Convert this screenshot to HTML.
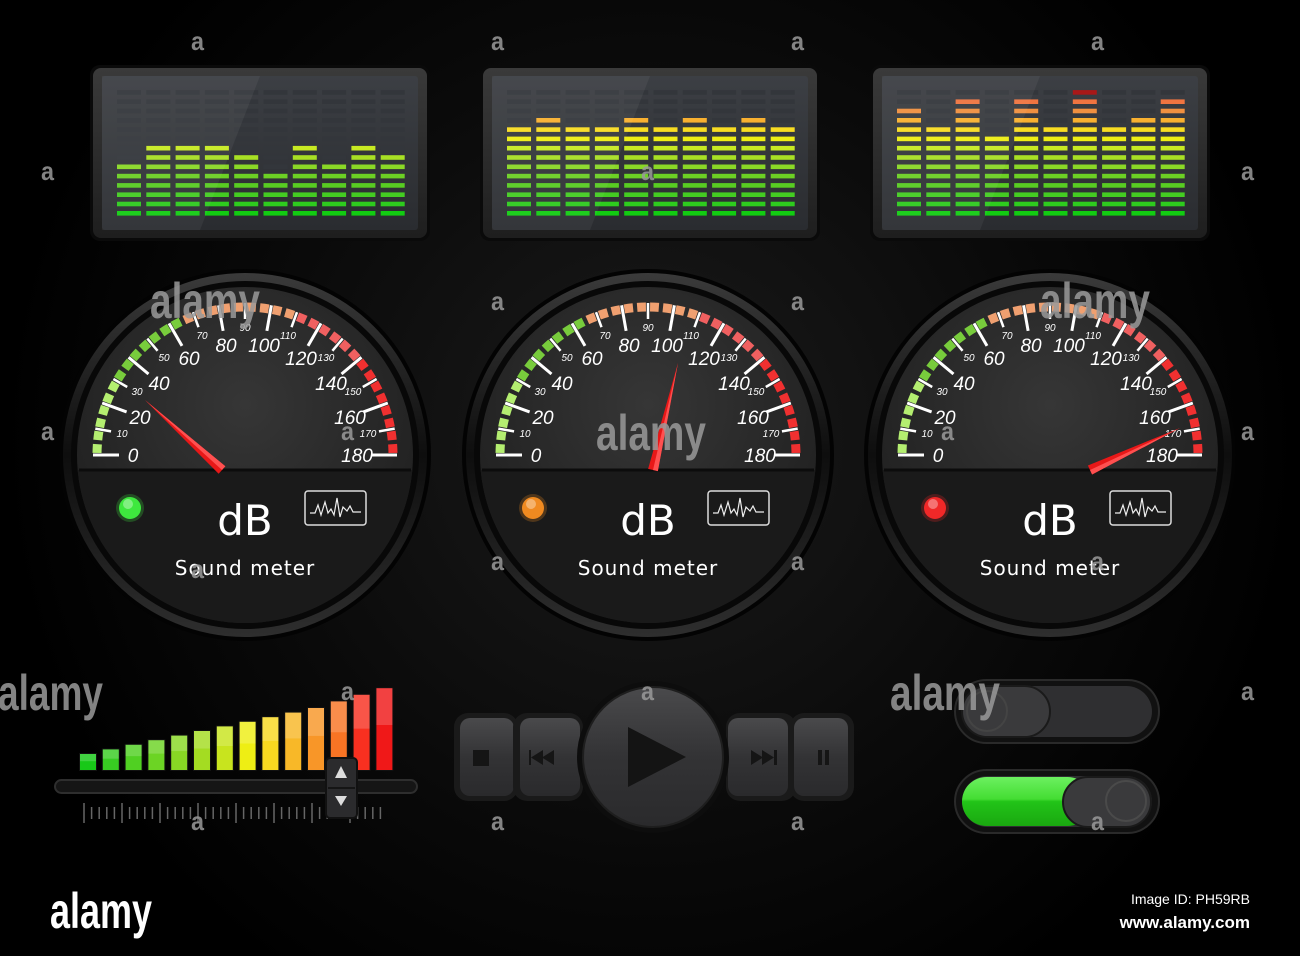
<!DOCTYPE html>
<html><head><meta charset="utf-8">
<style>
html,body{margin:0;padding:0;background:#000;}
svg{display:block;}
text{font-family:"Liberation Sans",sans-serif;}
.maj{font-size:19px;font-style:italic;fill:#fff;text-anchor:middle;}
.min{font-size:10px;font-style:italic;fill:#fff;text-anchor:middle;}
.wm{font-family:"Liberation Sans",sans-serif;font-weight:bold;fill:#9a9a9a;opacity:.85;}
.db{font-family:"DejaVu Sans",sans-serif;}
</style></head>
<body>
<svg id="s" width="1300" height="956" viewBox="0 0 1300 956" xmlns="http://www.w3.org/2000/svg">
<defs>
<radialGradient id="bg" cx="650" cy="440" r="650" gradientUnits="userSpaceOnUse">
<stop offset="0" stop-color="#1b1b1b"/><stop offset=".6" stop-color="#0a0a0a"/><stop offset="1" stop-color="#000"/></radialGradient>
<linearGradient id="ring" x1="0" y1="0" x2="0" y2="1">
<stop offset="0" stop-color="#3a3a3a"/><stop offset=".5" stop-color="#0e0e0e"/><stop offset="1" stop-color="#2e2e2e"/></linearGradient>
<radialGradient id="face" cx="0.5" cy="0.35" r="0.6">
<stop offset="0" stop-color="#363636"/><stop offset="1" stop-color="#202020"/></radialGradient>
<linearGradient id="panel" x1="0" y1="0" x2="0" y2="1">
<stop offset="0" stop-color="#3a3a3a"/><stop offset="1" stop-color="#1e1e1e"/></linearGradient>
<linearGradient id="screen" x1="0" y1="0" x2="0" y2="1">
<stop offset="0" stop-color="#3c3f44"/><stop offset="1" stop-color="#2a2c30"/></linearGradient>
<linearGradient id="btn" x1="0" y1="0" x2="0" y2="1">
<stop offset="0" stop-color="#4a4a4c"/><stop offset=".5" stop-color="#333335"/><stop offset="1" stop-color="#2a2a2c"/></linearGradient>
<linearGradient id="grn" x1="0" y1="0" x2="0" y2="1">
<stop offset="0" stop-color="#6cf060"/><stop offset=".45" stop-color="#44dd33"/><stop offset=".5" stop-color="#22c418"/><stop offset="1" stop-color="#1aa810"/></linearGradient>
<clipPath id="lower"><rect x="-200" y="15" width="400" height="200"/></clipPath>
</defs>
<rect width="1300" height="956" fill="url(#bg)"/>
<g id="eq"></g>
<g id="gauges"></g>

<g transform="translate(245,455)">
<text class="maj" x="-112" y="7">0</text><text class="maj" x="-105" y="-31">20</text><text class="maj" x="-86" y="-65">40</text><text class="maj" x="-56" y="-90">60</text><text class="maj" x="-19" y="-103">80</text><text class="maj" x="19" y="-103">100</text><text class="maj" x="56" y="-90">120</text><text class="maj" x="86" y="-65">140</text><text class="maj" x="105" y="-31">160</text><text class="maj" x="112" y="7">180</text>
<text class="min" x="-123" y="-18">10</text><text class="min" x="-108" y="-60">30</text><text class="min" x="-81" y="-94">50</text><text class="min" x="-43" y="-116">70</text><text class="min" x="0" y="-124">90</text><text class="min" x="43" y="-116">110</text><text class="min" x="81" y="-94">130</text><text class="min" x="108" y="-60">150</text><text class="min" x="123" y="-18">170</text>
<text class="db" x="0" y="80" font-size="42" fill="#fff" text-anchor="middle">dB</text>
<text class="db" x="0" y="120" font-size="20" fill="#fff" text-anchor="middle" letter-spacing="1">Sound meter</text>
</g>
<g transform="translate(648,455)">
<text class="maj" x="-112" y="7">0</text><text class="maj" x="-105" y="-31">20</text><text class="maj" x="-86" y="-65">40</text><text class="maj" x="-56" y="-90">60</text><text class="maj" x="-19" y="-103">80</text><text class="maj" x="19" y="-103">100</text><text class="maj" x="56" y="-90">120</text><text class="maj" x="86" y="-65">140</text><text class="maj" x="105" y="-31">160</text><text class="maj" x="112" y="7">180</text>
<text class="min" x="-123" y="-18">10</text><text class="min" x="-108" y="-60">30</text><text class="min" x="-81" y="-94">50</text><text class="min" x="-43" y="-116">70</text><text class="min" x="0" y="-124">90</text><text class="min" x="43" y="-116">110</text><text class="min" x="81" y="-94">130</text><text class="min" x="108" y="-60">150</text><text class="min" x="123" y="-18">170</text>
<text class="db" x="0" y="80" font-size="42" fill="#fff" text-anchor="middle">dB</text>
<text class="db" x="0" y="120" font-size="20" fill="#fff" text-anchor="middle" letter-spacing="1">Sound meter</text>
</g>
<g transform="translate(1050,455)">
<text class="maj" x="-112" y="7">0</text><text class="maj" x="-105" y="-31">20</text><text class="maj" x="-86" y="-65">40</text><text class="maj" x="-56" y="-90">60</text><text class="maj" x="-19" y="-103">80</text><text class="maj" x="19" y="-103">100</text><text class="maj" x="56" y="-90">120</text><text class="maj" x="86" y="-65">140</text><text class="maj" x="105" y="-31">160</text><text class="maj" x="112" y="7">180</text>
<text class="min" x="-123" y="-18">10</text><text class="min" x="-108" y="-60">30</text><text class="min" x="-81" y="-94">50</text><text class="min" x="-43" y="-116">70</text><text class="min" x="0" y="-124">90</text><text class="min" x="43" y="-116">110</text><text class="min" x="81" y="-94">130</text><text class="min" x="108" y="-60">150</text><text class="min" x="123" y="-18">170</text>
<text class="db" x="0" y="80" font-size="42" fill="#fff" text-anchor="middle">dB</text>
<text class="db" x="0" y="120" font-size="20" fill="#fff" text-anchor="middle" letter-spacing="1">Sound meter</text>
</g>
<g id="needles"></g>

<g id="lvl"></g>
<rect x="55" y="780" width="362" height="13" rx="6.5" fill="#151515" stroke="#2e2e2e" stroke-width="2"/>
<g id="ticks"></g>
<rect x="326" y="758" width="31" height="60" rx="4" fill="#2b2b2d" stroke="#111" stroke-width="2"/>
<line x1="328" y1="788" x2="355" y2="788" stroke="#151515" stroke-width="2"/>
<polygon points="341,766 335,778 347,778" fill="#ddd"/>
<polygon points="341,806 335,796 347,796" fill="#ddd"/>

<rect x="454" y="713" width="64" height="88" rx="14" fill="#1a1a1a"/>
<rect x="460" y="718" width="54" height="78" rx="10" fill="url(#btn)"/>
<rect x="473" y="750" width="16" height="16" fill="#151515"/>
<rect x="513" y="713" width="70" height="88" rx="14" fill="#1a1a1a"/>
<rect x="520" y="718" width="60" height="78" rx="10" fill="url(#btn)"/>
<polygon points="529,750 531,750 531,765 529,765" fill="#151515"/><polygon points="531,757.5 543,750 543,765" fill="#151515"/><polygon points="542,757.5 554,750 554,765" fill="#151515"/>
<rect x="726" y="713" width="70" height="88" rx="14" fill="#1a1a1a"/>
<rect x="728" y="718" width="60" height="78" rx="10" fill="url(#btn)"/>
<polygon points="751,750 763,757.5 751,765" fill="#151515"/><polygon points="762,750 774,757.5 762,765" fill="#151515"/><rect x="774" y="750" width="3" height="15" fill="#151515"/>
<rect x="790" y="713" width="64" height="88" rx="14" fill="#1a1a1a"/>
<rect x="794" y="718" width="54" height="78" rx="10" fill="url(#btn)"/>
<rect x="818" y="750" width="4" height="15" fill="#151515"/><rect x="825" y="750" width="4" height="15" fill="#151515"/>
<circle cx="653" cy="757" r="76" fill="#0d0d0d"/>
<circle cx="653" cy="757" r="70" fill="url(#btn)" stroke="#1e1e1e" stroke-width="2"/>
<polygon points="628,727 628,787 686,757" fill="#141414"/>

<rect x="955" y="680" width="204" height="63" rx="31.5" fill="#111" stroke="#2a2a2a" stroke-width="2"/>
<rect x="962" y="686" width="190" height="51" rx="25.5" fill="#2f2f31"/>
<rect x="962" y="686" width="88" height="51" rx="25.5" fill="#3a3a3c" stroke="#1a1a1a" stroke-width="2"/>
<circle cx="987" cy="711" r="20" fill="none" stroke="#444" stroke-width="2"/>
<rect x="955" y="770" width="204" height="63" rx="31.5" fill="#111" stroke="#2a2a2a" stroke-width="2"/>
<rect x="962" y="776" width="190" height="51" rx="25.5" fill="#2f2f31"/>
<rect x="962" y="777" width="130" height="49" rx="24.5" fill="url(#grn)"/>
<rect x="1063" y="777" width="88" height="50" rx="25" fill="#3a3a3c" stroke="#1a1a1a" stroke-width="2"/>
<circle cx="1126" cy="801" r="20" fill="none" stroke="#4a4a4a" stroke-width="2"/>

<text class="wm" x="150" y="318" font-size="50" textLength="110" lengthAdjust="spacingAndGlyphs">alamy</text>
<text class="wm" x="1040" y="318" font-size="50" textLength="110" lengthAdjust="spacingAndGlyphs">alamy</text>
<text class="wm" x="596" y="450" font-size="50" textLength="110" lengthAdjust="spacingAndGlyphs">alamy</text>
<text class="wm" x="-2" y="710" font-size="50" textLength="105" lengthAdjust="spacingAndGlyphs">alamy</text>
<text class="wm" x="890" y="710" font-size="50" textLength="110" lengthAdjust="spacingAndGlyphs">alamy</text>
<g class="wm" font-size="26">
<text x="191" y="50" textLength="13" lengthAdjust="spacingAndGlyphs">a</text><text x="491" y="50" textLength="13" lengthAdjust="spacingAndGlyphs">a</text><text x="791" y="50" textLength="13" lengthAdjust="spacingAndGlyphs">a</text><text x="1091" y="50" textLength="13" lengthAdjust="spacingAndGlyphs">a</text>
<text x="41" y="180" textLength="13" lengthAdjust="spacingAndGlyphs">a</text><text x="641" y="180" textLength="13" lengthAdjust="spacingAndGlyphs">a</text><text x="1241" y="180" textLength="13" lengthAdjust="spacingAndGlyphs">a</text>
<text x="491" y="310" textLength="13" lengthAdjust="spacingAndGlyphs">a</text><text x="791" y="310" textLength="13" lengthAdjust="spacingAndGlyphs">a</text>
<text x="41" y="440" textLength="13" lengthAdjust="spacingAndGlyphs">a</text><text x="341" y="440" textLength="13" lengthAdjust="spacingAndGlyphs">a</text><text x="941" y="440" textLength="13" lengthAdjust="spacingAndGlyphs">a</text><text x="1241" y="440" textLength="13" lengthAdjust="spacingAndGlyphs">a</text>
<text x="191" y="578" textLength="13" lengthAdjust="spacingAndGlyphs">a</text><text x="491" y="570" textLength="13" lengthAdjust="spacingAndGlyphs">a</text><text x="791" y="570" textLength="13" lengthAdjust="spacingAndGlyphs">a</text><text x="1091" y="570" textLength="13" lengthAdjust="spacingAndGlyphs">a</text>
<text x="341" y="700" textLength="13" lengthAdjust="spacingAndGlyphs">a</text><text x="641" y="700" textLength="13" lengthAdjust="spacingAndGlyphs">a</text><text x="1241" y="700" textLength="13" lengthAdjust="spacingAndGlyphs">a</text>
<text x="191" y="830" textLength="13" lengthAdjust="spacingAndGlyphs">a</text><text x="491" y="830" textLength="13" lengthAdjust="spacingAndGlyphs">a</text><text x="791" y="830" textLength="13" lengthAdjust="spacingAndGlyphs">a</text><text x="1091" y="830" textLength="13" lengthAdjust="spacingAndGlyphs">a</text>
</g>
<text x="50" y="928" font-weight="bold" font-size="50" fill="#fff" textLength="102" lengthAdjust="spacingAndGlyphs">alamy</text>
<text x="1250" y="904" font-size="14" fill="#fff" text-anchor="end">Image ID: PH59RB</text>
<text x="1250" y="928" font-size="17" font-weight="bold" fill="#fff" text-anchor="end">www.alamy.com</text>
</svg>
<script>
(function(){
var NS="http://www.w3.org/2000/svg";
function el(p,t,a){var e=document.createElementNS(NS,t);for(var k in a)e.setAttribute(k,a[k]);p.appendChild(e);return e;}
var eq=document.getElementById('eq');
var rowC=['#12cc12','#2ecc1e','#44cc22','#58cc22','#6cd024','#8ad826','#a8e024','#c8ea22','#eeee14','#f8dc22','#f8b030','#f09040','#f07440','#e82222'];
var panels=[[90,[6,8,8,8,7,5,8,6,8,7]],[480,[10,11,10,10,11,10,11,10,11,10]],[870,[12,10,13,9,13,10,14,10,11,13]]];
panels.forEach(function(p){
 var x=p[0];
 el(eq,'rect',{x:x,y:65,width:340,height:176,rx:10,fill:'#0a0a0a'});
 el(eq,'rect',{x:x+3,y:68,width:334,height:170,rx:8,fill:'url(#panel)'});
 el(eq,'rect',{x:x+12,y:76,width:316,height:154,rx:3,fill:'url(#screen)'});
 for(var c=0;c<10;c++){for(var r=0;r<14;r++){
  var lit=r<p[1][c];var col=(r==13&&c==6&&x==870)?'#a81818':rowC[r];
  el(eq,'rect',{x:x+27+c*29.3,y:211-r*9.3,width:24,height:4.6,fill:lit?col:'#33363b'});
 }}
 el(eq,'polygon',{points:(x+12)+',76 '+(x+170)+',76 '+(x+110)+',230 '+(x+12)+',230',fill:'#fff',opacity:'0.05'});
});
var g=document.getElementById('gauges');
function bandCol(v){if(v<30)return '#b4ee70';if(v<65)return '#78cc3c';if(v<110)return '#f0a070';if(v<140)return '#f06060';return '#f03030';}
[245,648,1050].forEach(function(cx,idx){
 var cy=455;
 el(g,'circle',{cx:cx,cy:cy,r:186,fill:'#030303'});
 el(g,'circle',{cx:cx,cy:cy,r:182,fill:'url(#ring)'});
 el(g,'circle',{cx:cx,cy:cy,r:174,fill:'#080808'});
 el(g,'circle',{cx:cx,cy:cy,r:168,fill:'url(#face)'});
 var lg=el(g,'g',{transform:'translate('+cx+','+cy+')'});
 el(lg,'circle',{cx:0,cy:0,r:168,fill:'#1a1a1a','clip-path':'url(#lower)'});
 el(lg,'line',{x1:-166,y1:15,x2:166,y2:15,stroke:'#0c0c0c','stroke-width':3});
 for(var v=0;v<180;v+=5){
  var a1=(180-v-0.8)*Math.PI/180,a2=(180-v-4.2)*Math.PI/180,R=148;
  el(lg,'path',{d:'M'+(R*Math.cos(a1))+' '+(-R*Math.sin(a1))+' A'+R+' '+R+' 0 0 1 '+(R*Math.cos(a2))+' '+(-R*Math.sin(a2)),stroke:bandCol(v+2.5),'stroke-width':9,fill:'none'});
 }
 for(var v=0;v<=180;v+=10){
  var a=(180-v)*Math.PI/180,r1=(v%20==0)?126:136,r2=152;
  el(lg,'line',{x1:r1*Math.cos(a),y1:-r1*Math.sin(a),x2:r2*Math.cos(a),y2:-r2*Math.sin(a),stroke:'#fff','stroke-width':(v%20==0)?3:2.5});
 }
 var led=['#3ee83e','#f08a20','#f02828'][idx];
 el(lg,'circle',{cx:-115,cy:53,r:14,fill:led,opacity:.25});
 el(lg,'circle',{cx:-115,cy:53,r:11,fill:led});
 el(lg,'circle',{cx:-117,cy:49,r:5,fill:'#fff',opacity:.35});
 el(lg,'rect',{x:60,y:36,width:61,height:34,rx:3,fill:'none',stroke:'#ddd','stroke-width':1.5});
 el(lg,'polyline',{points:'65,58 70,58 73,50 76,60 80,47 83,58 86,54 89,60 92,43 95,62 98,52 102,56 105,51 108,57 116,57',fill:'none',stroke:'#eee','stroke-width':1.2});
});
var nd=document.getElementById('needles');
function needle(bx,by,tx,ty){var dx=tx-bx,dy=ty-by,L=Math.hypot(dx,dy),px=-dy/L*5,py=dx/L*5;
 el(nd,'polygon',{points:(bx+px)+','+(by+py)+' '+tx+','+ty+' '+(bx-px)+','+(by-py),fill:'#e81818'});
 el(nd,'polygon',{points:(bx+px)+','+(by+py)+' '+tx+','+ty+' '+bx+','+by,fill:'#ff5050'});}
needle(222,470,145,400);needle(653,470,678,363);needle(1090,470,1180,428);
var lv=document.getElementById('lvl');
var lc=['#18c818','#38cc22','#50d022','#6cd424','#88d824','#a4dc22','#c8e41e','#eeee14','#f8d820','#f8b828','#f89628','#f87424','#f83020','#f01818'];
for(var i=0;i<14;i++){var bx=80+i*22.8,ty=754-i*4.6-(i>10?(i-10)*2:0),h=770-ty;
 el(lv,'rect',{x:bx-1,y:ty-1,width:18,height:h+2,fill:'#111'});
 el(lv,'rect',{x:bx,y:ty,width:16,height:h,fill:lc[i]});
 el(lv,'rect',{x:bx,y:ty,width:16,height:h*0.45,fill:'#fff',opacity:.18});}
var tk=document.getElementById('ticks');
for(var i=0;i<40;i++){var x=84+i*7.6,big=i%5==0;
 el(tk,'line',{x1:x,y1:big?803:807,x2:x,y2:big?823:819,stroke:'#666','stroke-width':1.5});}
})();
</script>
</body></html>
